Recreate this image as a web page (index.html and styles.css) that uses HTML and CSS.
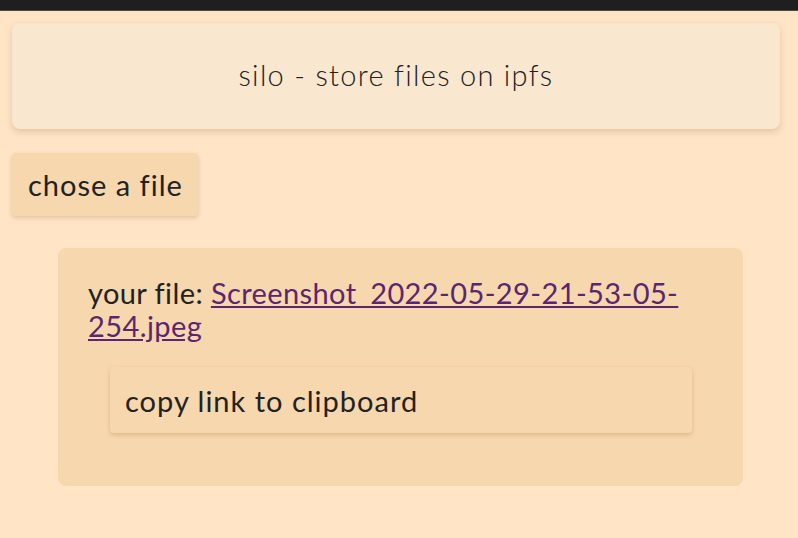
FILE: index.html
```html
<!DOCTYPE html>
<html lang="en">
<head>
  <meta charset="UTF-8" />
  <meta name="viewport" content="width=device-width, initial-scale=1.0" />
  <title>silo</title>
  <link rel="stylesheet" href="styles.css">
</head>
<body>
  <div class="topbar"></div>

  <main class="page">
    <header class="title">silo - store files on ipfs</header>

    <div class="actions">
      <button class="chose">chose a file</button>
    </div>

    <section class="result">
      <p class="file-line">your file: <a href="#">Screenshot_2022-05-29-21-53-05-254.jpeg</a></p>
      <button class="copy">copy link to clipboard</button>
    </section>
  </main>
</body>
</html>
```

FILE: styles.css
```css
:root {
  --bg-color: #ffe4c6;
  --title-bg: #f9e7cf;
  --card-bg: #f7d7ad;
  --text-color: #222;
  --link-color: #5a2670;
}

body {
  margin: 0;
  padding: 0;
  font-family: 'Lato', 'Open Sans', sans-serif;
  background-color: var(--bg-color);
  color: var(--text-color);
  letter-spacing: 1px;
}

.topbar {
  height: 10px;
  background: #1f1f1f;
  border-bottom: 1px solid #4a4842;
}

.page {
  padding: 12px 18px 0 12px;
}

.title {
  height: 106px;
  display: flex;
  align-items: center;
  justify-content: center;
  padding-bottom: 4px;
  box-sizing: border-box;
  background: var(--title-bg);
  border-radius: 8px;
  box-shadow: 0 3px 6px rgba(150, 110, 60, 0.25);
  font-size: 29px;
  font-weight: 300;
  letter-spacing: 1.3px;
}

.actions {
  margin-top: 24px;
}

button {
  font-family: inherit;
  letter-spacing: inherit;
  color: var(--text-color);
  border: none;
  background: var(--card-bg);
  border-radius: 4px;
  box-shadow: 0 2px 4px rgba(150, 110, 60, 0.28);
  cursor: pointer;
}

.chose {
  height: 63px;
  padding: 0 15px 0 16px;
  font-size: 29px;
}

.result {
  margin: 32px 37px 0 46px;
  height: 238px;
  box-sizing: border-box;
  padding: 28px 30px 0 30px;
  background: var(--card-bg);
  border-radius: 8px;
}

.file-line {
  margin: 0;
  font-size: 29px;
  line-height: 33px;
  letter-spacing: 0.4px;
}

.file-line a {
  color: var(--link-color);
}

.copy {
  display: block;
  box-sizing: border-box;
  margin: 25px 21px 0 22px;
  width: calc(100% - 43px);
  height: 66px;
  padding: 0 15px;
  text-align: left;
  font-size: 29px;
}
```
